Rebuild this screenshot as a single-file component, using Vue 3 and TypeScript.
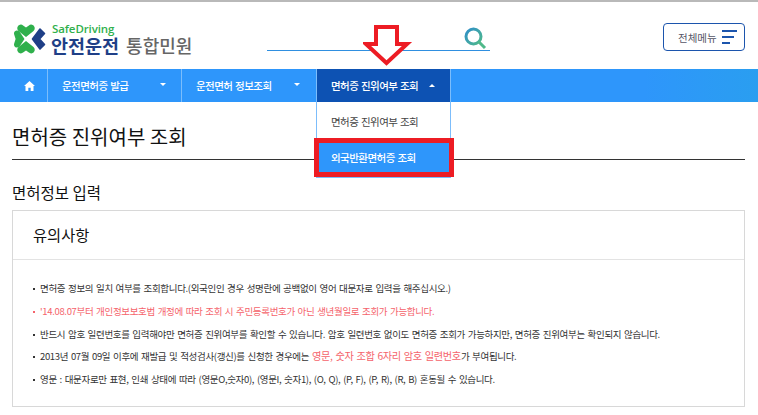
<script setup lang="ts">
interface Note { parts: { t: string; red?: boolean }[]; red?: boolean }
const notes: Note[] = [
  { parts: [{ t: '면허증 정보의 일치 여부를 조회합니다.(외국인인 경우 성명란에 공백없이 영어 대문자로 입력을 해주십시오.)' }] },
  { red: true, parts: [{ t: "'14.08.07부터 개인정보보호법 개정에 따라 조회 시 주민등록번호가 아닌 생년월일로 조회가 가능합니다.", red: true }] },
  { parts: [{ t: '반드시 암호 일련번호를 입력해야만 면허증 진위여부를 확인할 수 있습니다. 암호 일련번호 없이도 면허증 조회가 가능하지만, 면허증 진위여부는 확인되지 않습니다.' }] },
  { parts: [{ t: '2013년 07월 09일 이후에 재발급 및 적성검사(갱신)를 신청한 경우에는 ' }, { t: '영문, 숫자 조합 6자리 암호 일련번호', red: true }, { t: '가 부여됩니다.' }] },
  { parts: [{ t: '영문 : 대문자로만 표현, 인쇄 상태에 따라 (영문O,숫자0), (영문I, 숫자1), (O, Q), (P, F), (P, R), (R, B) 혼동될 수 있습니다.' }] },
]
</script>

<template>
  <div class="page">
    <header class="header">
      <div class="logo">
        <svg class="mark" width="33" height="32" viewBox="0 0 33 32">
          <g fill="#2fb04c">
            <path d="M4.5 4 a3.6 3.6 0 0 1 5.6 -1.6 L13 4.4 L15.9 2.4 a3.6 3.6 0 0 1 5.6 1.6 a3.8 3.8 0 0 1 -1 4 L13 14 L5.5 8 a3.8 3.8 0 0 1 -1 -4 z" />
            <path d="M4.5 28 a3.6 3.6 0 0 0 5.6 1.6 L13 27.6 L15.9 29.6 a3.6 3.6 0 0 0 5.6 -1.6 a3.8 3.8 0 0 0 -1 -4 L13 18 L5.5 24 a3.8 3.8 0 0 0 -1 4 z" />
            <path d="M3.5 7.5 a3 3 0 0 0 -2.4 3.8 L2.6 16 L1.1 20.7 a3 3 0 0 0 2.4 3.8 a3.5 3.5 0 0 0 3 -1 L11.5 16 L6.5 8.5 a3.5 3.5 0 0 0 -3 -1 z" />
          </g>
          <path d="M27 6 L19.5 16 L27 26 L31.5 21.5 L26.5 16 L31.5 10.5 z" fill="#1f3f87" stroke="#1f3f87" stroke-width="1.6" stroke-linejoin="round" />
        </svg>
        <div class="logo-text">
          <div class="safe">SafeDriving</div>
          <div class="names"><span class="name-main">안전운전</span><span class="name-sub">통합민원</span></div>
        </div>
      </div>
      <div class="search">
        <svg class="search-icon" width="26" height="26" viewBox="0 0 26 26">
          <defs>
            <linearGradient id="sg" x1="0" y1="0" x2="1" y2="1">
              <stop offset="0" stop-color="#2f8fc9" />
              <stop offset="1" stop-color="#4fb98a" />
            </linearGradient>
          </defs>
          <circle cx="10.5" cy="10.5" r="7.5" fill="none" stroke="url(#sg)" stroke-width="3" />
          <path d="M15.5 15.5 L22 22" stroke="#4fb98a" stroke-width="3" fill="none" />
        </svg>
      </div>
      <button class="all-menu">
        <span>전체메뉴</span>
        <span class="bars"><i class="b1"></i><i class="b2"></i><i class="b3"></i></span>
      </button>
    </header>

    <nav class="nav">
      <div class="home">
        <svg width="11" height="10" viewBox="0 0 12 11"><path d="M6 0 L12 5.6 L10.4 5.6 L10.4 11 L7.3 11 L7.3 7.4 L4.7 7.4 L4.7 11 L1.6 11 L1.6 5.6 L0 5.6 z" fill="#fff" /></svg>
      </div>
      <div class="item first"><span>운전면허증 발급</span><i class="caret down"></i></div>
      <div class="item second"><span>운전면허 정보조회</span><i class="caret down"></i></div>
      <div class="item active">
        <span>면허증 진위여부 조회</span><i class="caret up"></i>
        <div class="dropdown">
          <div class="dd-row">면허증 진위여부 조회</div>
          <div class="dd-row selected">외국반환면허증 조회</div>
        </div>
      </div>
    </nav>

    <main class="main">
      <h1 class="title">면허증 진위여부 조회</h1>
      <h2 class="sub">면허정보 입력</h2>
      <section class="box">
        <h3 class="box-head">유의사항</h3>
        <ul class="list">
          <li v-for="(n, i) in notes" :key="i" :class="{ red: n.red, mixed: n.parts.length > 1 }">
            <span v-for="(p, j) in n.parts" :key="j" :class="{ redtext: p.red }">{{ p.t }}</span>
          </li>
        </ul>
      </section>
    </main>

    <svg class="annot" width="50" height="44" viewBox="0 0 50 44">
      <path d="M13 3 H34 V20 H44 L23.5 39 L3 20 H13 z" fill="#fff" stroke="#ed1c24" stroke-width="4" />
    </svg>
  </div>
</template>

<style>
html, body { margin: 0; padding: 0; background: #fff; overflow: hidden; }
</style>

<style scoped>
.page {
  position: relative;
  width: 758px;
  height: 415px;
  overflow: hidden;
  font-family: "Noto Sans CJK KR", "Noto Sans", sans-serif;
  color: #222;
  background: #fff;
}
.header {
  height: 67px;
  border-top: 2px solid #b9b9b9;
  display: flex;
  align-items: flex-start;
  padding: 0 13px;
}
.logo { display: flex; margin-top: 21px; width: 254px; flex: none; }
.mark { flex: none; }
.logo-text { margin-left: 5px; margin-top: 0; }
.safe {
  font-family: "Open Sans", sans-serif;
  font-weight: 600;
  font-size: 11.5px;
  line-height: 11px;
  color: #2fb04c;
  letter-spacing: -0.1px;
  padding-left: 1px;
}
.names { display: flex; align-items: baseline; line-height: 22px; white-space: nowrap; margin-top: 0; }
.name-main { font-size: 18.5px; font-weight: 700; color: #1f3f87; letter-spacing: 0; }
.name-sub { font-size: 18px; font-weight: 500; color: #666; margin-left: 7px; }
.search {
  position: relative;
  flex: none;
  box-sizing: border-box;
  width: 223px;
  height: 49px;
  border-bottom: 1px solid #2f8fe0;
}
.search-icon { position: absolute; left: 196px; top: 24px; }
.all-menu {
  margin-left: 173px;
  margin-top: 21px;
  flex: none;
  box-sizing: border-box;
  width: 82px;
  height: 28px;
  background: #fff;
  border: 1px solid #1c55ad;
  border-radius: 4px;
  padding: 0 7px 0 14px;
  display: flex;
  align-items: center;
  justify-content: space-between;
  font-family: inherit;
  font-size: 10.5px;
  color: #556;
}
.bars { display: flex; flex-direction: column; gap: 4px; width: 15px; }
.bars i { display: block; height: 2px; background: #1c55ad; }
.b1 { width: 15px; }
.b2 { width: 12px; }
.b3 { width: 8px; }
.nav {
  height: 33px;
  display: flex;
  background: linear-gradient(90deg, #2e96fb 0%, #2e96fb 85%, #2a9ef0 100%);
  color: #fff;
  font-size: 10.5px;
  font-weight: 500;
  letter-spacing: -0.55px;
  word-spacing: 0.8px;
}
.home {
  box-sizing: border-box;
  width: 48px;
  padding-left: 24px;
  display: flex;
  align-items: center;
  border-right: 1px solid #7cbdfb;
}
.item {
  position: relative;
  box-sizing: border-box;
  display: flex;
  align-items: center;
  padding-left: 14px;
  border-right: 1px solid #7cbdfb;
}
.first { width: 134px; }
.second { width: 135px; }
.active {
  width: 135px;
  background: #0d52b3;
  padding-left: 14px;
  border-left: 1px solid #7cbdfb;
  margin-left: -1px;
}
.caret { position: absolute; width: 0; height: 0; border-left: 3px solid transparent; border-right: 3px solid transparent; }
.caret.down { border-top: 3px solid #fff; right: 15px; top: 14px; }
.caret.up { border-bottom: 3px solid #fff; right: 15px; top: 15px; }
.second .caret.down { right: 16px; }
.dropdown {
  position: absolute;
  left: -1px;
  top: 33px;
  width: 135px;
  box-sizing: border-box;
  background: #fff;
  color: #444;
  border: 1px solid #7cbdfb;
  border-top: none;
  z-index: 3;
}
.dd-row { height: 36px; line-height: 39px; padding-left: 14px; font-weight: 400; font-size: 10.5px; white-space: nowrap; }
.selected {
  box-sizing: border-box;
  height: 39px;
  line-height: 29px;
  margin: 0 -4px 0 -3px;
  width: 140px;
  padding-left: 12px;
  background: #2e96fb;
  color: #fff;
  border: 5px solid #ed1c24;
  font-weight: 500;
}
.main { padding: 0 13px 0 12px; }
.title {
  margin: 0;
  height: 58px;
  box-sizing: border-box;
  padding-top: 20px;
  font-size: 20px;
  line-height: 30px;
  font-weight: 400;
  color: #111;
  border-bottom: 1px solid #333;
}
.sub {
  margin: 22px 0 0;
  font-size: 15.5px;
  line-height: 20px;
  font-weight: 400;
  color: #111;
  height: 28px;
}
.box { border: 1px solid #d8d8d8; height: 197px; box-sizing: border-box; }
.box-head {
  margin: 0;
  height: 49px;
  box-sizing: border-box;
  border-bottom: 1px solid #e3e3e3;
  padding-left: 20px;
  font-size: 15.3px;
  line-height: 47px;
  font-weight: 400;
  color: #111;
}
.list { list-style: none; margin: 0; padding: 17px 0 0 19px; }
.list li {
  position: relative;
  padding-left: 8px;
  height: 22.75px;
  line-height: 22px;
  font-size: 9.5px;
  letter-spacing: -0.34px;
  word-spacing: 1px;
  color: #333;
  white-space: nowrap;
}
.list li::before {
  content: "";
  position: absolute;
  left: 1px;
  top: 11px;
  width: 2px;
  height: 2px;
  background: #333;
}
.list li.red::before { background: #f5636b; }
.redtext { color: #f5636b; }
.mixed .redtext { font-size: 10.2px; }
.annot { position: absolute; left: 363px; top: 24px; z-index: 4; }
</style>
